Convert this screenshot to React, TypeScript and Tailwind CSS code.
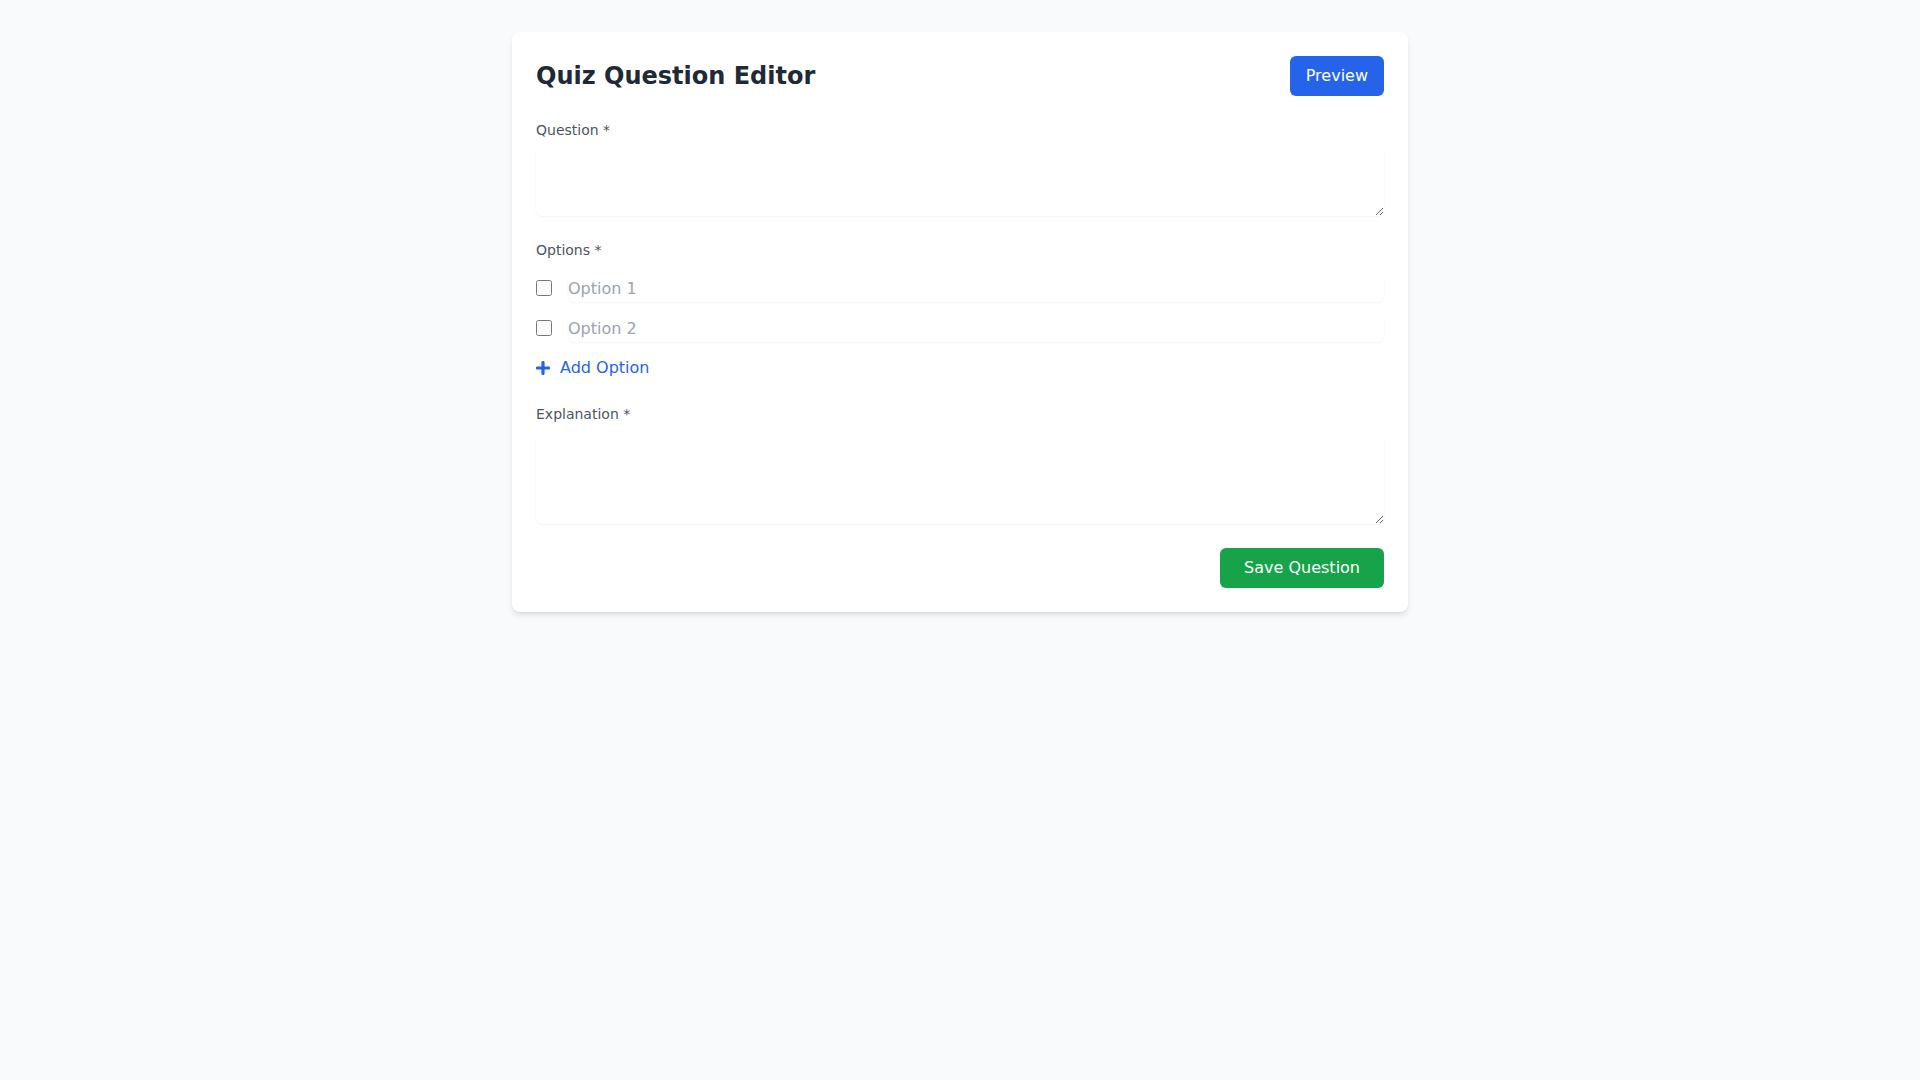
import React, { useState } from 'react';

export default function App() {
  const [question, setQuestion] = useState('');
  const [options, setOptions] = useState<{ text: string; correct: boolean }[]>([
    { text: '', correct: false },
    { text: '', correct: false },
  ]);
  const [explanation, setExplanation] = useState('');

  const updateOption = (i: number, patch: Partial<{ text: string; correct: boolean }>) => {
    setOptions(options.map((o, idx) => (idx === i ? { ...o, ...patch } : o)));
  };

  return (
    <div className="min-h-screen bg-[#f9fafb] pt-8 font-['DejaVu_Sans',sans-serif]">
      <div className="max-w-4xl mx-auto bg-white rounded-lg shadow-md p-6">
        {/* Header */}
        <div className="flex justify-between items-center mb-6">
          <h1 className="text-2xl font-bold text-[#1f2937]">Quiz Question Editor</h1>
          <button className="px-4 py-2 bg-[#2563eb] text-white text-base rounded-md">Preview</button>
        </div>

        {/* Question */}
        <label className="block text-sm text-[#4b5563] mb-1.5">Question *</label>
        <textarea
          value={question}
          onChange={(e) => setQuestion(e.target.value)}
          className="block w-full h-[70px] border-0 rounded-md p-2 text-base shadow-[0_1px_2px_0_rgba(0,0,0,0.05)] focus:outline-none"
        />

        {/* Options */}
        <label className="block text-sm text-[#4b5563] mt-6 mb-3">Options *</label>
        <div className="space-y-2">
          {options.map((opt, i) => (
            <div key={i} className="flex items-center gap-4 h-8">
              <input
                type="checkbox"
                checked={opt.correct}
                onChange={(e) => updateOption(i, { correct: e.target.checked })}
                className="w-4 h-4 shrink-0"
              />
              <input
                type="text"
                value={opt.text}
                onChange={(e) => updateOption(i, { text: e.target.value })}
                placeholder={`Option ${i + 1}`}
                className="flex-1 h-7 border-0 rounded-md px-0 text-base text-[#1f2937] placeholder-[#9ca3af] shadow-[0_1px_2px_0_rgba(0,0,0,0.05)] focus:outline-none"
              />
            </div>
          ))}
        </div>
        <button
          onClick={() => setOptions([...options, { text: '', correct: false }])}
          className="mt-3 flex items-center gap-2.5 text-[#2563eb] text-base leading-6"
        >
          <svg width="14" height="14" viewBox="0 0 14 14" fill="none" stroke="currentColor" strokeWidth="3.2" strokeLinecap="round">
            <path d="M7 1.5v11M1.5 7h11" />
          </svg>
          <span>Add Option</span>
        </button>

        {/* Explanation */}
        <label className="block text-sm text-[#4b5563] mt-6 mb-2">Explanation *</label>
        <textarea
          value={explanation}
          onChange={(e) => setExplanation(e.target.value)}
          className="block w-full h-[92px] border-0 rounded-md p-2 text-base shadow-[0_1px_2px_0_rgba(0,0,0,0.05)] focus:outline-none"
        />

        <div className="flex justify-end mt-6">
          <button className="px-6 py-2 bg-[#16a34a] text-white text-base rounded-md">Save Question</button>
        </div>
      </div>
    </div>
  );
}
